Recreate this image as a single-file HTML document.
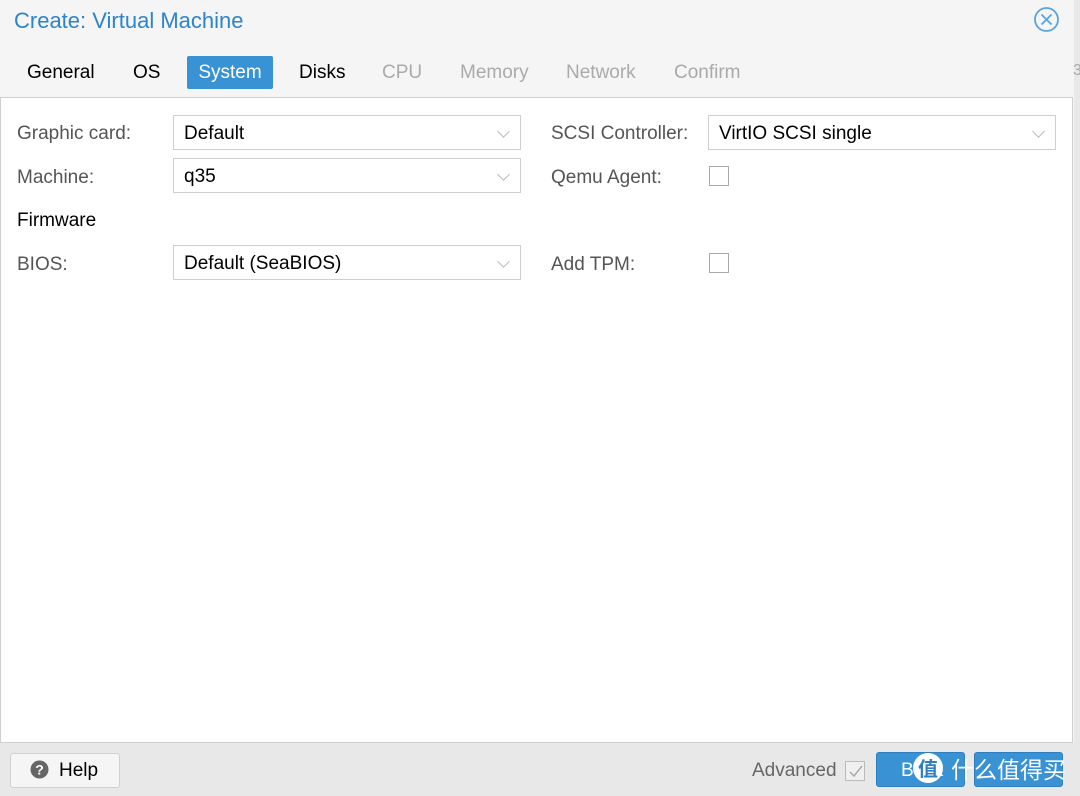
<!DOCTYPE html>
<html style="width:1080px;height:796px;overflow:hidden"><head><meta charset="utf-8"><style>
*{box-sizing:border-box;margin:0;padding:0}
body{width:1080px;height:796px;overflow:hidden;background:#f5f5f5;font-family:"Liberation Sans",Arial,sans-serif;position:relative}
.abs{position:absolute;white-space:nowrap}
.title{left:14px;top:8px;font-size:22px;color:#2c84cc}
.tab{top:56px;height:33px;line-height:33px;font-size:19px;color:#000;padding:0 11px}
.tab.dis{color:#aaa}
.tab.act{background:#3892d4;color:#fff;border-radius:2px}
.body{left:0;top:97px;width:1073px;height:646px;background:#fff;border:1px solid #cfcfcf}
.lbl{font-size:19px;color:#555}
.sel{height:35px;border:1px solid #cfcfcf;background:#fff;font-size:19px;color:#000;padding-left:10px;line-height:35px}
.sel:after{content:"";position:absolute;right:12px;top:11px;width:8px;height:8px;border-right:1.3px solid #bbb;border-bottom:1.3px solid #bbb;transform:rotate(45deg)}
.cb{width:20px;height:20px;border:1.5px solid #aaa;background:#fff}
.footer{left:0;top:743px;width:1075px;height:53px;background:#e8e8e8}
.btn{height:35px;border-radius:3px;font-size:19px}
</style></head><body>
<div class="abs title">Create: Virtual Machine</div>
<svg class="abs" style="left:1033px;top:6px" width="27" height="27" viewBox="0 0 27 27"><circle cx="13.5" cy="13.5" r="11.5" fill="none" stroke="#5ba3df" stroke-width="1.8"/><path d="M8.5 8.5L18.5 18.5M18.5 8.5L8.5 18.5" stroke="#5ba3df" stroke-width="1.8"/></svg>
<div class="abs" style="left:1074px;top:0;width:6px;height:796px;background:#e8e8e8"></div>
<div class="abs" style="left:1073px;top:62px;font-size:16px;color:#aaa">3</div>
<div class="abs tab" style="left:16px">General</div>
<div class="abs tab" style="left:122px">OS</div>
<div class="abs tab act" style="left:187px;width:86px;text-align:center;padding:0">System</div>
<div class="abs tab" style="left:288px">Disks</div>
<div class="abs tab dis" style="left:371px">CPU</div>
<div class="abs tab dis" style="left:449px">Memory</div>
<div class="abs tab dis" style="left:555px">Network</div>
<div class="abs tab dis" style="left:663px">Confirm</div>
<div class="abs body"></div>
<div class="abs lbl" style="left:17px;top:123px">Graphic card:</div>
<div class="abs sel" style="left:173px;top:115px;width:348px">Default</div>
<div class="abs lbl" style="left:17px;top:167px">Machine:</div>
<div class="abs sel" style="left:173px;top:158px;width:348px">q35</div>
<div class="abs" style="left:17px;top:210px;font-size:19px;color:#000">Firmware</div>
<div class="abs lbl" style="left:17px;top:254px">BIOS:</div>
<div class="abs sel" style="left:173px;top:245px;width:348px">Default (SeaBIOS)</div>
<div class="abs lbl" style="left:551px;top:123px">SCSI Controller:</div>
<div class="abs sel" style="left:708px;top:115px;width:348px">VirtIO SCSI single</div>
<div class="abs lbl" style="left:551px;top:167px">Qemu Agent:</div>
<div class="abs cb" style="left:709px;top:166px"></div>
<div class="abs lbl" style="left:551px;top:254px">Add TPM:</div>
<div class="abs cb" style="left:709px;top:253px"></div>
<div class="abs footer"></div>
<div class="abs btn" style="left:10px;top:753px;width:110px;background:#f5f5f5;border:1px solid #d0d0d0"></div>
<svg class="abs" style="left:30px;top:760px" width="19" height="19" viewBox="0 0 19 19"><circle cx="9.5" cy="9.5" r="9" fill="#666"/><text x="9.5" y="14.5" font-size="14" font-weight="bold" fill="#fff" text-anchor="middle" font-family="Liberation Sans">?</text></svg>
<div class="abs" style="left:59px;top:760px;font-size:19px;color:#000">Help</div>
<div class="abs" style="left:752px;top:760px;font-size:19px;color:#666">Advanced</div>
<div class="abs cb" style="left:845px;top:761px;background:#f0f0f0;border-color:#bbb"></div>
<svg class="abs" style="left:847px;top:763px" width="18" height="18"><path d="M3 9l4 4 8-10" stroke="#aaa" stroke-width="1.5" fill="none"/></svg>
<div class="abs btn" style="left:876px;top:752px;width:89px;background:#3892d4;border:1px solid #2f7fbe"></div>
<div class="abs btn" style="left:974px;top:752px;width:89px;background:#3892d4;border:1px solid #2f7fbe"></div>
<div class="abs" style="left:901px;top:760px;font-size:19px;color:#fff">Back</div>
<div class="abs" style="left:913px;top:753px;width:30px;height:30px;border-radius:50%;background:#fff;color:#2f7fbe;font:bold 20px 'Noto Sans CJK SC',sans-serif;text-align:center;line-height:30px">值</div>
<div class="abs" style="left:951px;top:753px;font:23px/30px 'Noto Sans CJK SC',sans-serif;color:#fff">什么值得买</div>
</body></html>
